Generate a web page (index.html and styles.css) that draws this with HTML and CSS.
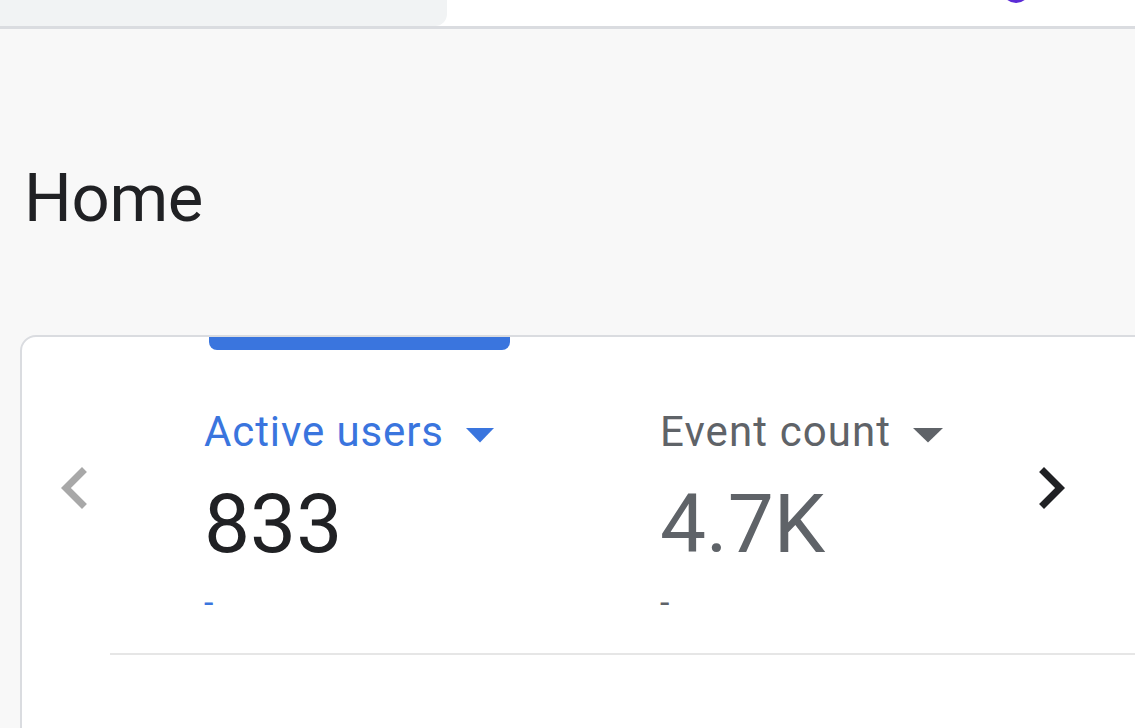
FILE: index.html
```html
<!DOCTYPE html>
<html lang="en">
<head>
<meta charset="utf-8">
<title>Home</title>
<link rel="stylesheet" href="styles.css">
</head>
<body>
<div class="page">
  <header class="topbar">
    <div class="search"></div>
    <div class="avatar"></div>
  </header>
  <main class="main">
    <h1 class="title">Home</h1>
    <section class="card">
      <div class="tab-indicator"></div>
      <div class="metrics-row">
        <button class="nav nav-prev" aria-label="Previous">
          <svg viewBox="0 0 24 24" width="84" height="84"><path d="M15.41 7.41L14 6l-6 6 6 6 1.41-1.41L10.83 12z"/></svg>
        </button>
        <div class="metric metric-active">
          <div class="metric-label">Active users<svg class="caret" width="28" height="15" viewBox="0 0 28 15"><polygon points="0,0 28,0 14,14.5"/></svg></div>
          <div class="metric-value">833</div>
          <div class="metric-delta">-</div>
        </div>
        <div class="metric metric-second">
          <div class="metric-label">Event count<svg class="caret" width="30" height="15" viewBox="0 0 30 15"><polygon points="0,0 30,0 15,14.5"/></svg></div>
          <div class="metric-value">4.7K</div>
          <div class="metric-delta">-</div>
        </div>
        <button class="nav nav-next" aria-label="Next">
          <svg viewBox="0 0 24 24" width="84" height="84"><path d="M10 6L8.59 7.41 13.17 12l-4.58 4.59L10 18l6-6z"/></svg>
        </button>
      </div>
      <div class="divider"></div>
    </section>
  </main>
</div>
</body>
</html>
```

FILE: styles.css
```css
html, body {
  margin: 0;
  padding: 0;
  background: #f8f8f8;
  font-family: Roboto, "Liberation Sans", Arial, sans-serif;
}

.page {
  width: 1135px;
  height: 728px;
  overflow: hidden;
}

.topbar {
  display: flex;
  height: 26px;
  background: #ffffff;
  border-bottom: 3px solid #dadce0;
}

.search {
  width: 447px;
  height: 26px;
  background: #f1f3f4;
  border-bottom-right-radius: 12px;
}

.avatar {
  width: 28px;
  height: 28px;
  margin-top: -25px;
  margin-left: auto;
  margin-right: 105px;
  border-radius: 50%;
  background: #5b2bd6;
}

.title {
  margin: 0;
  padding: 129px 0 0 24px;
  font-size: 67px;
  line-height: 80px;
  font-weight: 400;
  color: #202124;
  letter-spacing: -0.3px;
}

.card {
  margin: 97px 0 0 20px;
  width: 1140px;
  height: 520px;
  background: #ffffff;
  border: 2px solid #dadce0;
  border-radius: 16px 0 0 0;
  box-sizing: border-box;
}

.tab-indicator {
  margin-left: 187px;
  width: 301px;
  height: 13px;
  background: #3a75de;
  border-radius: 0 0 8px 8px;
}

.metrics-row {
  display: flex;
  align-items: flex-start;
  margin-top: 57px;
}

.nav {
  flex: none;
  width: 84px;
  height: 84px;
  padding: 0;
  margin-top: 39px;
  border: 0;
  background: transparent;
}

.nav svg {
  display: block;
}

.nav-prev {
  margin-left: 11px;
  fill: #a8a8a8;
}

.nav-next {
  fill: #202124;
}

.metric {
  flex: none;
}

.metric-active {
  width: 456px;
  margin-left: 87px;
  color: #3a75de;
}

.metric-second {
  width: 349px;
  color: #5f6368;
}

.metric-label {
  font-size: 42px;
  line-height: 50px;
  white-space: nowrap;
  letter-spacing: 0.9px;
}

.metric-second .metric-label {
  letter-spacing: 1.1px;
}

.caret {
  margin-left: 22px;
  vertical-align: 3px;
  fill: currentColor;
}

.metric-value {
  margin-top: 22px;
  font-size: 82px;
  line-height: 90px;
}

.metric-active .metric-value {
  color: #202124;
}

.metric-delta {
  margin-top: 16px;
  font-size: 34px;
  line-height: 34px;
}

.divider {
  margin-left: 88px;
  margin-top: 34px;
  height: 2px;
  background: #e6e6e6;
}
```
